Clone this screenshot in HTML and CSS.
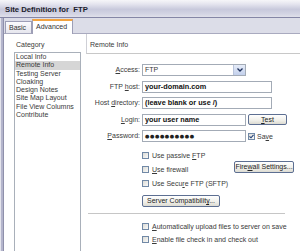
FILE: index.html
```html
<!DOCTYPE html>
<html lang="en">
<head>
    <meta charset="UTF-8">
    <title>Site Definition for FTP</title>
    <link rel="stylesheet" href="styles.css">
</head>
<body>
    <div class="titlebar">Site Definition for&nbsp; FTP</div>
    <div class="window">
        <div class="edge"></div>
        <div class="pane">
            <!-- Sekmeler -->
            <div class="tabs">
                <div class="tab basic">Basic</div>
                <div class="tab active">Advanced</div>
            </div>

            <div class="content">
                <!-- Kategori listesi -->
                <div class="sidebar">
                    <div class="caption">Category</div>
                    <ul class="list">
                        <li>Local Info</li>
                        <li class="selected">Remote Info</li>
                        <li>Testing Server</li>
                        <li>Cloaking</li>
                        <li>Design Notes</li>
                        <li>Site Map Layout</li>
                        <li>File View Columns</li>
                        <li>Contribute</li>
                    </ul>
                </div>

                <!-- Remote Info paneli -->
                <div class="panel">
                    <div class="panel-head">Remote Info</div>

                    <div class="form">
                        <div class="label"><u>A</u>ccess:</div>
                        <div class="select w104">
                            <span>FTP</span>
                            <span class="arrow">
                                <svg width="6" height="4" viewBox="0 0 6 4"><polyline points="0.5,0.5 3,3 5.5,0.5" fill="none" stroke="#1d2f5a" stroke-width="1.3"/></svg>
                            </span>
                        </div>

                        <div class="label">FTP <u>h</u>ost:</div>
                        <div class="field w130">your-domain.com</div>

                        <div class="label">Host <u>d</u>irectory:</div>
                        <div class="field w130">(leave blank or use /)</div>

                        <div class="label"><u>L</u>ogin:</div>
                        <div class="row">
                            <div class="field w104">your user name</div>
                            <div class="btn test"><u>T</u>est</div>
                        </div>

                        <div class="label"><u>P</u>assword:</div>
                        <div class="row">
                            <div class="field w104 dots">●●●●●●●●●●</div>
                            <span class="check checked">
                                <svg width="5" height="5" viewBox="0 0 5 5"><polyline points="0.5,2.3 2,3.8 4.5,0.8" fill="none" stroke="#21407a" stroke-width="1.1"/></svg>
                            </span>
                            <span class="save">Sa<u>v</u>e</span>
                        </div>
                    </div>

                    <div class="checks">
                        <div class="opt"><span class="check"></span><span>Use passive <u>F</u>TP</span></div>
                        <div class="opt"><span class="check"></span><span><u>U</u>se firewall</span><div class="btn firewall">Fire<u>w</u>all Settings...</div></div>
                        <div class="opt"><span class="check"></span><span>Use Secu<u>r</u>e FTP (SFTP)</span></div>
                    </div>

                    <div class="btn compat">Server Compatibilit<u>y</u>...</div>

                    <div class="sep"></div>

                    <div class="checks lower">
                        <div class="opt"><span class="check"></span><span><u>A</u>utomatically upload files to server on save</span></div>
                        <div class="opt"><span class="check"></span><span><u>E</u>nable file check in and check out</span></div>
                    </div>
                </div>
            </div>
        </div>
    </div>
</body>
</html>
```

FILE: styles.css
```css
body {
    margin: 0;
    width: 300px;
    height: 251px;
    overflow: hidden;
    background: #fff;
    color: #3a3a3a;
    font-family: "Liberation Sans", Arial, sans-serif;
    font-size: 7px;
}
u {
    text-decoration-thickness: 1px;
    text-underline-offset: 1px;
}

/* pencere başlığı */
.titlebar {
    height: 14px;
    padding: 3px 0 0 5px;
    line-height: 14px;
    border-bottom: 1px solid #8586a6;
    font-size: 7.7px;
    font-weight: bold;
    color: #1c1c2c;
    background: linear-gradient(#f6f6f9, #e4e4ee 25%, #c8c9dc 55%, #d2d3e3 80%, #e0e0ea);
}
.window {
    display: flex;
    height: 233px;
}
.edge {
    width: 4px;
    background: linear-gradient(to right, #e4e4ec 0 1px, #b4b5cc 1px 3px, #8f90ab 3px 4px);
}
.pane {
    flex: 1;
    display: flex;
    flex-direction: column;
    min-width: 0;
}

/* sekmeler */
.tabs {
    height: 15px;
    display: flex;
    align-items: flex-end;
    padding-left: 1px;
    background: #dcdde8;
    border-bottom: 1px solid #a9aabf;
}
.tab {
    margin-bottom: -1px;
    border: 1px solid #9d9eb6;
    border-bottom: none;
    padding-left: 3px;
    box-sizing: border-box;
    color: #333;
}
.tab.basic {
    width: 27px;
    height: 13px;
    line-height: 11px;
    border-bottom: 1px solid #a9aabf;
    background: linear-gradient(#fbfbfd, #e6e6ee);
}
.tab.active {
    width: 41px;
    height: 15px;
    line-height: 12px;
    border-top: 2px solid #f2a340;
    background: #fff;
}

/* içerik */
.content {
    flex: 1;
    display: flex;
    min-height: 0;
}
.sidebar {
    width: 67px;
    padding: 6px 5px 0 10px;
    display: flex;
    flex-direction: column;
}
.caption {
    height: 10px;
    line-height: 10px;
    margin-bottom: 2px;
    padding-left: 2px;
}
.list {
    flex: 1;
    margin: 0;
    padding: 0;
    list-style: none;
    border: 1px solid #a9b0ba;
    border-bottom: none;
}
.list li {
    height: 8.3px;
    line-height: 8.3px;
    padding-left: 1px;
    white-space: nowrap;
}
.list li.selected {
    background: #d6d6d6;
}

.panel {
    flex: 1;
    display: flex;
    flex-direction: column;
    min-width: 0;
}
.panel-head {
    height: 13px;
    padding: 6px 0 0 3px;
    line-height: 10px;
    border-left: 1px solid #cfd0d6;
    border-bottom: 1px solid #c8c8c8;
}

/* form */
.form {
    display: grid;
    grid-template-columns: 54px auto;
    grid-auto-rows: 12px;
    column-gap: 2px;
    row-gap: 4.5px;
    margin-top: 10px;
    align-items: center;
}
.label {
    text-align: right;
    line-height: 12px;
    white-space: nowrap;
}
.row {
    display: flex;
    align-items: center;
}
.field, .select {
    height: 12px;
    box-sizing: border-box;
    border: 1px solid #a3abb6;
    padding-left: 2px;
    line-height: 10px;
    white-space: nowrap;
    overflow: hidden;
}
.field {
    font-weight: bold;
    font-size: 7.3px;
    color: #111;
}
.field.dots {
    font-family: "DejaVu Sans", sans-serif;
    font-size: 5px;
    letter-spacing: 0.6px;
    color: #222;
}
.w104 { width: 104px; }
.w130 { width: 130px; }
.select {
    display: flex;
    justify-content: space-between;
    align-items: center;
    padding-right: 0;
}
.arrow {
    width: 12px;
    height: 10px;
    box-sizing: border-box;
    display: flex;
    align-items: center;
    justify-content: center;
    border-left: 1px solid #b9c4dc;
    background: linear-gradient(#e6ecf8, #c3d0ec);
}

/* düğmeler */
.btn {
    height: 11px;
    box-sizing: border-box;
    border: 1px solid #5d6f92;
    border-radius: 2px;
    background: linear-gradient(#ffffff, #f0efe9 60%, #dcdbd2);
    line-height: 9px;
    text-align: center;
    white-space: nowrap;
    color: #222;
}
.btn.test {
    width: 39px;
    margin-left: 2px;
}
.btn.firewall {
    width: 60px;
    height: 12px;
    line-height: 10px;
    margin-left: auto;
    margin-bottom: 4px;
}
.btn.compat {
    width: 78px;
    height: 12px;
    line-height: 10px;
    margin: 5px 0 0 56px;
}

/* onay kutuları */
.check {
    width: 7px;
    height: 7px;
    box-sizing: border-box;
    border: 1px solid #7189a6;
    background: linear-gradient(135deg, #dcdcd7, #fafaf8);
    display: inline-flex;
    align-items: center;
    justify-content: center;
    flex: none;
}
.check.checked {
    margin-left: 2px;
}
.save {
    margin-left: 2px;
}
.checks {
    width: 152px;
    margin: 6px 0 0 56px;
}
.opt {
    height: 14px;
    display: flex;
    align-items: center;
    white-space: nowrap;
}
.opt .check {
    margin-right: 3px;
}
.checks.lower {
    width: auto;
}
.checks.lower .opt {
    height: 13px;
}
.sep {
    width: 197px;
    height: 1px;
    margin: 6px 0 0 2px;
    background: #c6c6c6;
}
```
